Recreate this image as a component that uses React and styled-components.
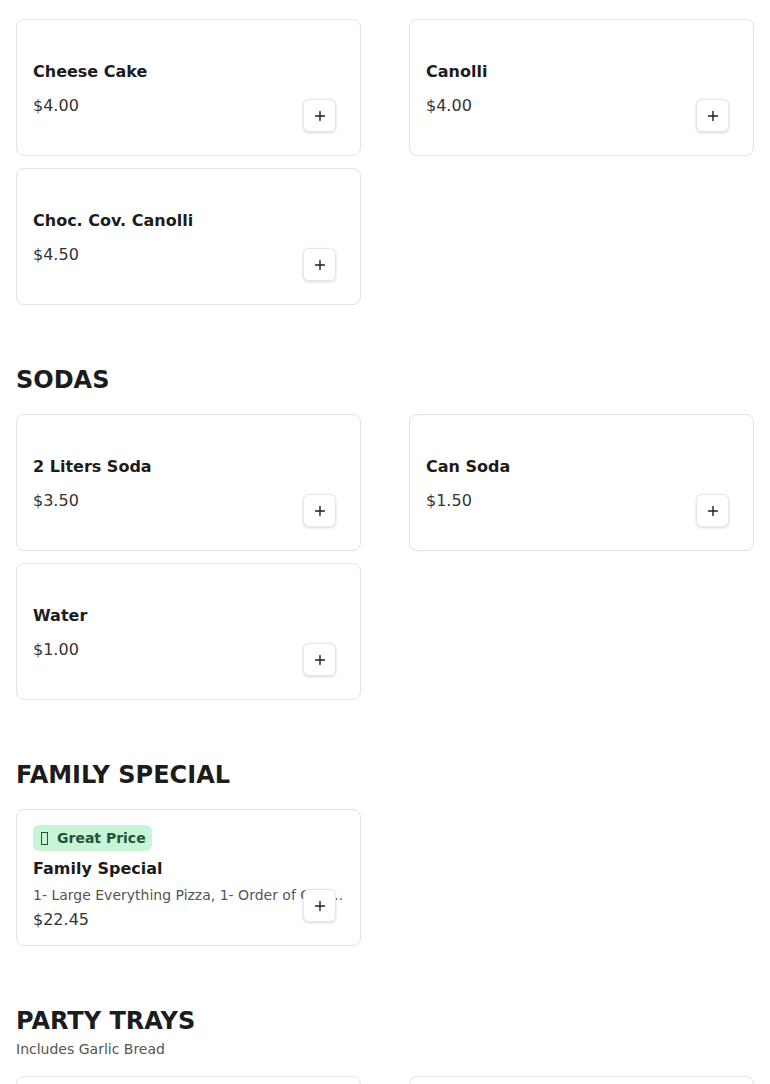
import { styled, createGlobalStyle } from 'styled-components';

const GlobalStyle = createGlobalStyle`
  * {
    box-sizing: border-box;
  }
  body {
    margin: 0;
    background: #ffffff;
    font-family: 'DejaVu Sans', 'Liberation Sans', sans-serif;
    color: #1f1f1f;
  }
`;

const menu = [
  {
    id: 'desserts',
    items: [
      { name: 'Cheese Cake', price: '$4.00' },
      { name: 'Canolli', price: '$4.00' },
      { name: 'Choc. Cov. Canolli', price: '$4.50' },
    ],
  },
  {
    id: 'sodas',
    title: 'SODAS',
    items: [
      { name: '2 Liters Soda', price: '$3.50' },
      { name: 'Can Soda', price: '$1.50' },
      { name: 'Water', price: '$1.00' },
    ],
  },
  {
    id: 'family',
    title: 'FAMILY SPECIAL',
    items: [
      {
        name: 'Family Special',
        price: '$22.45',
        badge: 'Great Price',
        description:
          '1- Large Everything Pizza, 1- Order of Garlic Knots, 1- Large Salad, 1- 2 Liters Soda',
      },
    ],
  },
  {
    id: 'trays',
    title: 'PARTY TRAYS',
    subtitle: 'Includes Garlic Bread',
    items: [
      { name: 'Baked Ziti Tray', price: '' },
      { name: 'Chicken Parm Tray', price: '' },
    ],
  },
];

const PlusIcon = () => (
  <svg width='12' height='12' viewBox='0 0 12 12' fill='none'>
    <path d='M6 1.5v9M1.5 6h9' stroke='#1f1f1f' strokeWidth='1.4' strokeLinecap='round' />
  </svg>
);

const MenuCard = ({ item }) => {
  const hasDescription = Boolean(item.description);
  return (
    <Card>
      {item.badge && (
        <Badge>
          <BadgeIcon aria-hidden='true' />
          {item.badge}
        </Badge>
      )}
      <ItemName>{item.name}</ItemName>
      {hasDescription && <Description>{item.description}</Description>}
      <Price $tight={hasDescription}>{item.price}</Price>
      <AddButton aria-label={`Add ${item.name}`}>
        <PlusIcon />
      </AddButton>
    </Card>
  );
};

const App = () => {
  return (
    <>
      <GlobalStyle />
      <Page>
        {menu.map((section) => (
          <Section key={section.id}>
            {section.title && (
              <SectionHeader>
                <SectionTitle>{section.title}</SectionTitle>
                {section.subtitle && <SectionSubtitle>{section.subtitle}</SectionSubtitle>}
              </SectionHeader>
            )}
            <Grid>
              {section.items.map((item) => (
                <MenuCard key={item.name} item={item} />
              ))}
            </Grid>
          </Section>
        ))}
      </Page>
    </>
  );
};

export default App;

const Page = styled.main`
  display: flex;
  flex-direction: column;
  gap: 59px;
  padding: 19px 16px 40px 16px;
`;

const Section = styled.section`
  display: flex;
  flex-direction: column;
`;

const SectionHeader = styled.div`
  display: flex;
  flex-direction: column;
  gap: 4px;
  margin-bottom: 18px;
`;

const SectionTitle = styled.h2`
  margin: 0;
  font-size: 24px;
  line-height: 32px;
  font-weight: 700;
  color: #1c1c1c;
`;

const SectionSubtitle = styled.p`
  margin: 0;
  font-size: 14px;
  line-height: 17px;
  color: #555555;
`;

const Grid = styled.div`
  display: grid;
  grid-template-columns: 1fr 1fr;
  column-gap: 48px;
  row-gap: 12px;
`;

const Card = styled.div`
  position: relative;
  height: 137px;
  background: #ffffff;
  border: 1px solid #e2e2e2;
  border-radius: 8px;
  padding: 2px 16px 0 16px;

  display: flex;
  flex-direction: column;
  justify-content: center;
  overflow: hidden;

  & > * {
    flex-shrink: 0;
  }
`;

const Badge = styled.span`
  align-self: flex-start;
  display: inline-flex;
  align-items: center;
  gap: 9px;
  height: 26px;
  padding: 0 6px 0 8px;
  margin-bottom: 6px;
  border-radius: 6px;
  background: #c6f6d5;
  color: #22543d;
  font-size: 14px;
  font-weight: 700;
`;

const BadgeIcon = styled.span`
  display: block;
  width: 7px;
  height: 13px;
  border: 1px solid #22543d;
`;

const ItemName = styled.h3`
  margin: 0;
  font-size: 16px;
  line-height: 24px;
  font-weight: 700;
  color: #1c1c1c;
`;

const Description = styled.p`
  margin: 4px 0 0 0;
  font-size: 14px;
  line-height: 20px;
  color: #555555;
  white-space: nowrap;
  overflow: hidden;
  text-overflow: ellipsis;
`;

const Price = styled.p`
  margin: ${({ $tight }) => ($tight ? '3px' : '10px')} 0 0 0;
  font-size: 16px;
  line-height: 24px;
  color: #333333;
`;

const AddButton = styled.button`
  position: absolute;
  right: 24px;
  bottom: 23px;
  width: 33px;
  height: 33px;
  display: flex;
  align-items: center;
  justify-content: center;
  padding: 0;
  background: #ffffff;
  border: 1px solid #e6e6e6;
  border-radius: 6px;
  box-shadow: 0 1px 3px rgba(0, 0, 0, 0.15);
  cursor: pointer;
`;
